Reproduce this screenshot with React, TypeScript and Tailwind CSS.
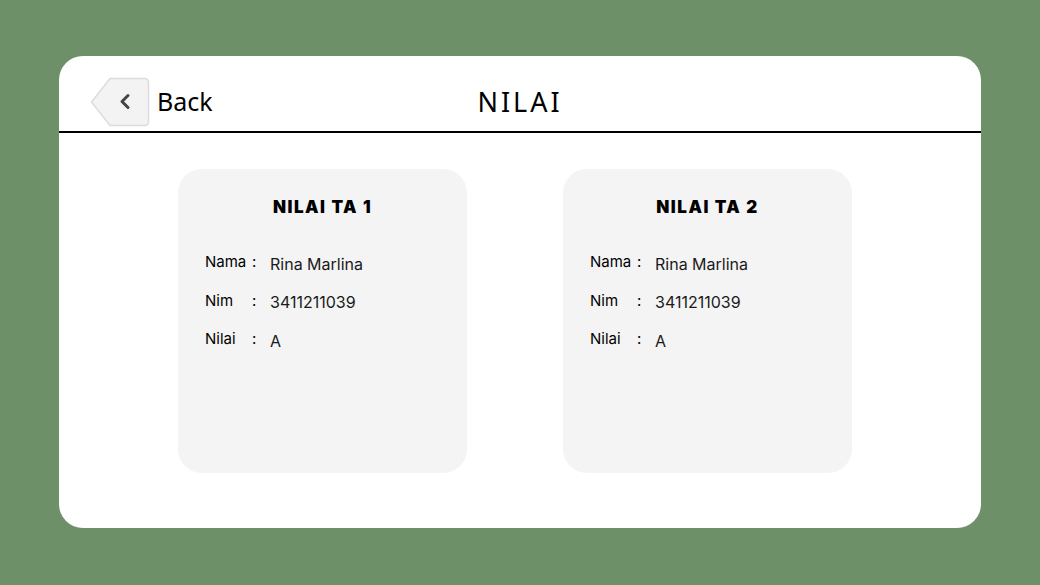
import { ReactNode } from "react";

type Nilai = {
  id: number;
  title: string;
  nama: string;
  nim: string;
  nilai: string;
};

const daftarNilai: Nilai[] = [
  { id: 1, title: "NILAI TA 1", nama: "Rina Marlina", nim: "3411211039", nilai: "A" },
  { id: 2, title: "NILAI TA 2", nama: "Rina Marlina", nim: "3411211039", nilai: "A" },
];

function BackButton() {
  return (
    <button className="flex items-center gap-[7px]">
      <svg width="60" height="50" viewBox="0 0 60 50" className="block">
        <path
          d="M20 1.5 H55 a3.5 3.5 0 0 1 3.5 3.5 V45 a3.5 3.5 0 0 1 -3.5 3.5 H20 L1.5 25 Z"
          fill="#f3f3f3"
          stroke="#dcdcdc"
          strokeWidth="1.5"
          strokeLinejoin="round"
        />
        <path
          d="M38 18.5 L32 24.5 L38 30.5"
          fill="none"
          stroke="#454545"
          strokeWidth="3"
          strokeLinecap="round"
          strokeLinejoin="round"
        />
      </svg>
      <span className="text-[25px] leading-none text-black font-['Noto_Sans',sans-serif] -mt-[2px]">
        Back
      </span>
    </button>
  );
}

function Row({ label, value }: { label: string; value: ReactNode }) {
  return (
    <div className="flex items-center h-[38.5px]">
      <span className="w-[47px] text-[15px] text-black font-['Inter',sans-serif] -mt-[3px]">{label}</span>
      <span className="w-[18px] text-[15px] text-black font-['Inter',sans-serif] -mt-[3px]">:</span>
      <span className="text-[16px] text-[#1a1a1a] font-['Inter',sans-serif]">{value}</span>
    </div>
  );
}

export default function App() {
  return (
    <div className="w-[1040px] h-[585px] bg-[#6e9069] pt-[56px] overflow-hidden">
      <div className="mx-[59px] h-[472px] bg-white rounded-[24px] overflow-hidden">
        <header className="grid grid-cols-[1fr_auto_1fr] items-center h-[77px] border-b-2 border-black px-[31px] pt-[17px]">
          <div className="flex">
            <BackButton />
          </div>
          <h1 className="text-[27px] leading-none text-black font-['Noto_Sans',sans-serif] tracking-[3px] -mt-[2px]">
            NILAI
          </h1>
          <div />
        </header>

        <div className="flex justify-center gap-[96px] pt-[36px] pr-[10px]">
          {daftarNilai.map((n) => (
            <div key={n.id} className="w-[289px] h-[304px] bg-[#f4f4f4] rounded-[24px] pt-[26px] pl-[27px]">
              <h2 className="text-center pr-[27px] text-[17px] font-black tracking-[1.5px] text-black font-['Inter',sans-serif]">
                {n.title}
              </h2>
              <div className="mt-[24px]">
                <Row label="Nama" value={n.nama} />
                <Row label="Nim" value={n.nim} />
                <Row label="Nilai" value={n.nilai} />
              </div>
            </div>
          ))}
        </div>
      </div>
    </div>
  );
}
